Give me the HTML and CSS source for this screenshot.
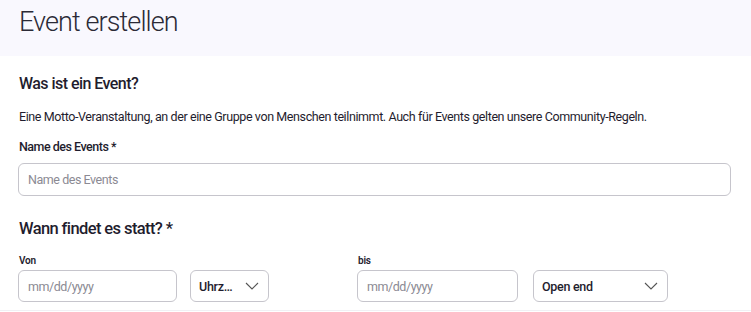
FILE: index.html
```html
<!DOCTYPE html>
<html lang="de">
<head>
    <meta charset="UTF-8">
    <meta name="viewport" content="width=device-width, initial-scale=1.0">
    <title>Event erstellen</title>
    <link rel="stylesheet" href="styles.css">
</head>
<body>
    <div class="page-header">
        <h1>Event erstellen</h1>
    </div>

    <form class="event-form">
        <h2>Was ist ein Event?</h2>
        <p class="intro">Eine Motto-Veranstaltung, an der eine Gruppe von Menschen teilnimmt. Auch für Events gelten unsere Community-Regeln.</p>

        <label class="field-label" for="event-name">Name des Events *</label>
        <input class="text-input" id="event-name" type="text" placeholder="Name des Events">

        <h2 class="when-title">Wann findet es statt? *</h2>

        <div class="date-row">
            <div class="date-group from">
                <span class="small-label">Von</span>
                <div class="date-controls">
                    <div class="date-input">mm/dd/yyyy</div>
                    <div class="select time-select">
                        <span>Uhrz…</span>
                        <svg width="14" height="8" viewBox="0 0 14 8"><path d="M1 1l6 6 6-6" fill="none" stroke="#555" stroke-width="1.1"/></svg>
                    </div>
                </div>
            </div>
            <div class="date-group to">
                <span class="small-label">bis</span>
                <div class="date-controls">
                    <div class="date-input">mm/dd/yyyy</div>
                    <div class="select end-select">
                        <span>Open end</span>
                        <svg width="14" height="8" viewBox="0 0 14 8"><path d="M1 1l6 6 6-6" fill="none" stroke="#555" stroke-width="1.1"/></svg>
                    </div>
                </div>
            </div>
        </div>
    </form>
    <div class="section-end"></div>
</body>
</html>
```

FILE: styles.css
```css
body {
    margin: 0;
    font-family: Roboto, "Liberation Sans", sans-serif;
    color: #1f1d2e;
    background: #fff;
}

.page-header {
    background: #f9f8fe;
    height: 56px;
    padding: 0 19px;
}

.page-header h1 {
    margin: 0;
    padding-top: 4px;
    font-size: 27px;
    font-weight: 300;
    line-height: 36px;
    letter-spacing: -0.9px;
    color: #2b2a36;
}

.event-form {
    padding: 17px 20px 0 18px;
}

.event-form h2 {
    margin: 0 0 0 1px;
    font-size: 16px;
    font-weight: 500;
    line-height: 22px;
    letter-spacing: -0.55px;
}

.intro {
    margin: 13px 0 0 1px;
    font-size: 12.5px;
    line-height: 17px;
    letter-spacing: -0.4px;
}

.field-label {
    display: block;
    margin: 13px 0 0 1px;
    font-size: 12.5px;
    font-weight: 500;
    line-height: 17px;
    letter-spacing: -0.5px;
}

.text-input {
    display: block;
    box-sizing: border-box;
    width: 100%;
    height: 33px;
    margin-top: 8px;
    padding: 0 9px;
    border: 1px solid #c6c5cc;
    border-radius: 6px;
    font-family: inherit;
    font-size: 12.5px;
    letter-spacing: -0.45px;
    color: #1f1d2e;
}

.text-input::placeholder {
    color: #8b8a93;
}

.event-form .when-title {
    margin-top: 22px;
    font-size: 16.5px;
    letter-spacing: -0.6px;
}

.date-row {
    display: flex;
    margin-top: 15px;
}

.date-group.from {
    width: 339px;
}

.small-label {
    display: block;
    margin-left: 1px;
    font-size: 10px;
    font-weight: 600;
    line-height: 12px;
    letter-spacing: -0.2px;
}

.date-controls {
    display: flex;
    margin-top: 3px;
}

.date-input,
.select {
    box-sizing: border-box;
    height: 32px;
    border: 1px solid #c6c5cc;
    border-radius: 6px;
    font-size: 12.5px;
    display: flex;
    align-items: center;
}

.date-input {
    padding-left: 9px;
    color: #8b8a93;
    letter-spacing: -0.45px;
}

.from .date-input {
    width: 159px;
}

.to .date-input {
    width: 161px;
}

.select {
    justify-content: space-between;
    padding: 0 9px 0 8px;
    font-weight: 500;
    letter-spacing: -0.3px;
    color: #1f1d2e;
}

.time-select {
    width: 79px;
    margin-left: 13px;
}

.end-select {
    width: 135px;
    margin-left: 15px;
}

.section-end {
    margin-top: 8px;
    border-top: 1px solid #f1f0f4;
}
```
